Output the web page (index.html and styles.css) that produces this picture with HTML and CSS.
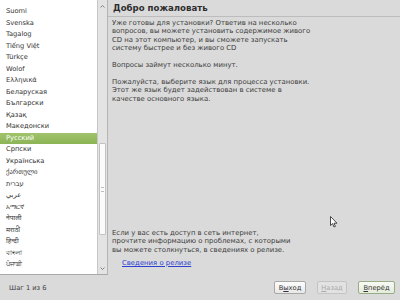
FILE: index.html
```html
<!DOCTYPE html>
<html lang="ru">
<head>
  <meta charset="UTF-8">
  <title>Установка</title>
  <link rel="stylesheet" href="styles.css">
</head>
<body>
  <div class="window">
    <div class="sidebar">
      <ul class="lang-list">
        <li>Suomi</li>
        <li>Svenska</li>
        <li>Tagalog</li>
        <li>Tiếng Việt</li>
        <li>Türkçe</li>
        <li>Wolof</li>
        <li>Ελληνικά</li>
        <li>Беларуская</li>
        <li>Български</li>
        <li>Қазақ</li>
        <li>Македонски</li>
        <li class="selected">Русский</li>
        <li>Српски</li>
        <li>Українська</li>
        <li>ქართული</li>
        <li>עברית</li>
        <li>عربي</li>
        <li>አማርኛ</li>
        <li>नेपाली</li>
        <li>मराठी</li>
        <li>हिन्दी</li>
        <li>বাংলা</li>
        <li>ਪੰਜਾਬੀ</li>
      </ul>
      <div class="scrollbar">
        <div class="arrow">
          <svg width="5" height="3" viewBox="0 0 5 3"><path d="M0.5 2.5 L2.5 0.5 L4.5 2.5" fill="none" stroke="#6a6a6a" stroke-width="0.8"/></svg>
        </div>
        <div class="track">
          <div class="thumb"><span class="grip"></span></div>
        </div>
        <div class="arrow">
          <svg width="5" height="3" viewBox="0 0 5 3"><path d="M0.5 0.5 L2.5 2.5 L4.5 0.5" fill="none" stroke="#6a6a6a" stroke-width="0.8"/></svg>
        </div>
      </div>
    </div>

    <div class="content">
      <h1 class="title">Добро пожаловать</h1>
      <div class="intro">
        <p>Уже готовы для установки? Ответив на несколько<br>вопросов, вы можете установить содержимое живого<br>CD на этот компьютер, и вы сможете запускать<br>систему быстрее и без живого CD</p>
        <p>Вопросы займут несколько минут.</p>
        <p>Пожалуйста, выберите язык для процесса установки.<br>Этот же язык будет задействован в системе в<br>качестве основного языка.</p>
      </div>
      <div class="notes">
        <p>Если у вас есть доступ в сеть интернет,<br>прочтите информацию о проблемах, с которыми<br>вы можете столкнуться, в сведениях о релизе.</p>
        <a href="#" class="release-link">Сведения о релизе</a>
      </div>
    </div>

    <div class="footer">
      <span class="step">Шаг 1 из 6</span>
      <div class="buttons">
        <button class="btn btn-quit">В<u>ы</u>ход</button>
        <button class="btn btn-back" disabled><u>Н</u>азад</button>
        <button class="btn btn-next"><u>В</u>перёд</button>
      </div>
    </div>
  </div>

  <svg class="cursor" width="8" height="12" viewBox="0 0 8 12">
    <path d="M0.5 0.5 L0.5 9.5 L2.6 7.6 L4 11 L5.4 10.4 L4 7.2 L7 7.2 Z" fill="#fff" stroke="#222" stroke-width="0.8"/>
  </svg>
</body>
</html>
```

FILE: styles.css
```css
body {
  margin: 0;
  width: 400px;
  height: 300px;
  overflow: hidden;
  background: #dadada;
  font-family: "DejaVu Sans", "Noto Sans", sans-serif;
  color: #3a3a3a;
  position: relative;
}
.window {
  display: grid;
  grid-template-columns: 108px 1fr;
  grid-template-rows: 275px 25px;
  height: 300px;
}

/* language list */
.sidebar {
  display: flex;
  border-right: 1px solid #b4b4b4;
  border-bottom: 1px solid #a9a9a9;
}
.lang-list {
  flex: 1;
  list-style: none;
  margin: 0;
  padding: 6px 0 0;
  background: #fff;
  font-size: 6.7px;
  color: #333;
  overflow: hidden;
}
.lang-list li {
  height: 11.5px;
  line-height: 11.5px;
  padding-left: 6px;
  white-space: nowrap;
}
.lang-list li.selected {
  background: linear-gradient(#a0c46a, #8cb356);
  color: #fff;
}
.scrollbar {
  width: 9px;
  display: flex;
  flex-direction: column;
  background: #e3e3e3;
  border-left: 1px solid #c6c6c6;
}
.arrow {
  height: 12px;
  display: flex;
  align-items: center;
  justify-content: center;
}
.track {
  flex: 1;
}
.thumb {
  margin: 131px 1px 0;
  height: 92px;
  background: #fbfbfb;
  border: 1px solid #c2c2c2;
  border-radius: 1px;
  box-sizing: border-box;
  display: flex;
  align-items: center;
  justify-content: center;
}
.grip {
  width: 3px;
  height: 3px;
  border-top: 1px solid #bdbdbd;
  border-bottom: 1px solid #bdbdbd;
}

/* right panel */
.content {
  display: flex;
  flex-direction: column;
  padding-top: 3px;
  font-size: 6.9px;
  line-height: 8.4px;
}
.title {
  margin: 0;
  padding: 0 0 3px 5px;
  font-size: 8.6px;
  line-height: 10px;
  font-weight: bold;
  color: #2e2e2e;
  border-bottom: 1px solid #bcbcbc;
}
.intro {
  padding: 2px 0 0 4px;
}
.intro p {
  margin: 0 0 8.4px;
}
.notes {
  margin-top: auto;
  padding: 0 0 8px 4px;
}
.notes p {
  margin: 0 0 4.4px;
}
.release-link {
  display: block;
  margin-left: 10px;
  color: #2b3fd0;
}

/* bottom bar */
.footer {
  grid-column: 1 / -1;
  display: flex;
  align-items: center;
  padding: 0 5px 0 9px;
}
.step {
  font-size: 6.7px;
}
.buttons {
  margin-left: auto;
  display: flex;
  gap: 11px;
}
.btn {
  height: 13px;
  padding: 0;
  font-family: "DejaVu Sans", sans-serif;
  font-size: 6.7px;
  color: #333;
  background: linear-gradient(#fdfdfd, #e8e8e8);
  border: 1px solid #a8a8a8;
  border-radius: 2px;
}
.btn-quit { width: 32px; }
.btn-back {
  width: 30px;
  color: #a9a9a9;
  border-color: #c4c4c4;
  background: #e2e2e2;
}
.btn-next {
  width: 37px;
  border-color: #98ad86;
  background: linear-gradient(#f8fbf4, #e4ecdc);
}

.cursor {
  position: absolute;
  left: 330px;
  top: 216px;
}
```
